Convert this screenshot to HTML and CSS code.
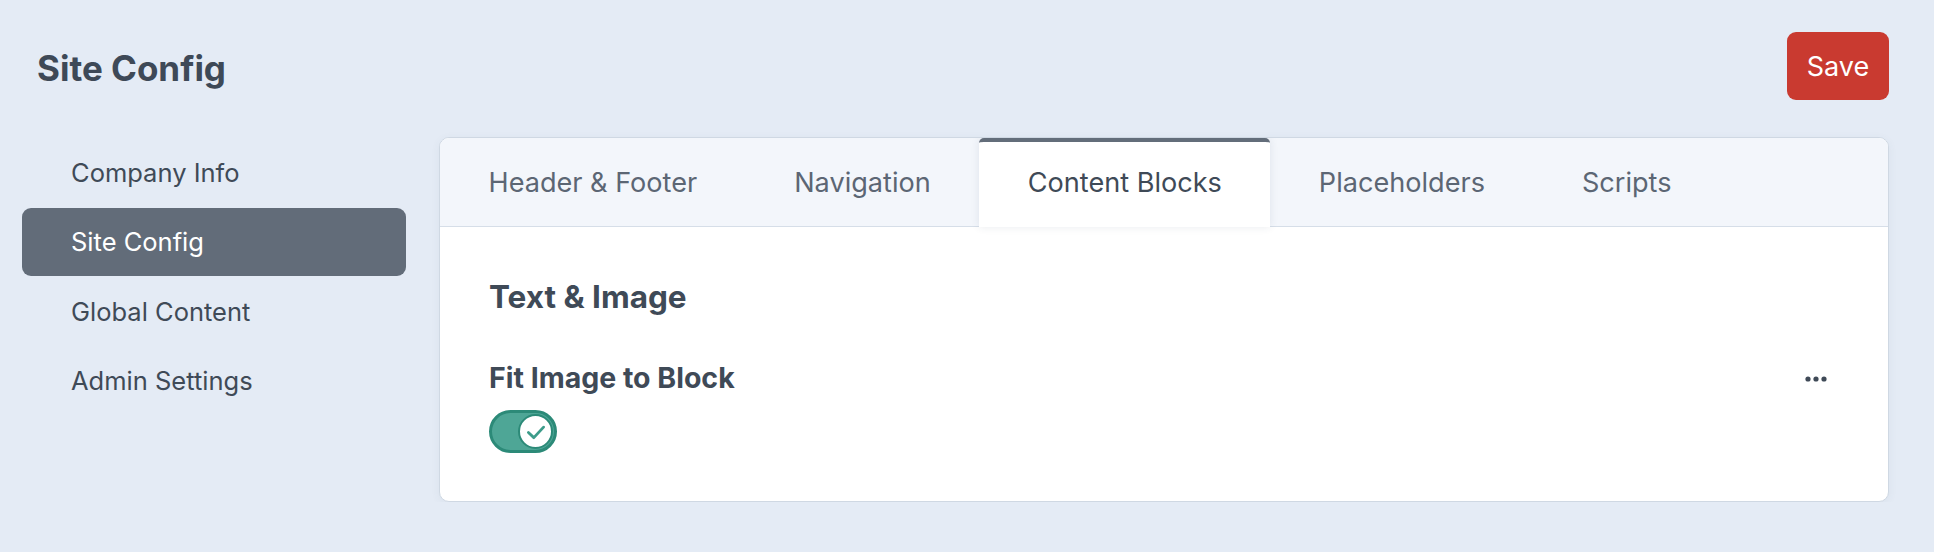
FILE: index.html
```html
<!DOCTYPE html>
<html lang="en">
<head>
<meta charset="utf-8">
<title>Site Config</title>
<link rel="stylesheet" href="styles.css">
</head>
<body>
<div class="page">
  <header class="topbar">
    <h1 class="title">Site Config</h1>
    <button class="save-btn" type="button">Save</button>
  </header>
  <div class="main">
    <nav class="sidebar">
      <a class="side-item">Company Info</a>
      <a class="side-item active">Site Config</a>
      <a class="side-item">Global Content</a>
      <a class="side-item">Admin Settings</a>
    </nav>
    <section class="card">
      <div class="tabs">
        <div class="tab">Header &amp; Footer</div>
        <div class="tab">Navigation</div>
        <div class="tab active">Content Blocks</div>
        <div class="tab">Placeholders</div>
        <div class="tab">Scripts</div>
      </div>
      <div class="card-body">
        <h2 class="block-title">Text &amp; Image</h2>
        <div class="field-row">
          <div class="field">
            <div class="field-label">Fit Image to Block</div>
            <div class="toggle on">
              <span class="knob">
                <svg viewBox="0 0 24 24" width="26" height="26" aria-hidden="true">
                  <path d="M5 12.5 L10 17.2 L19 7.5" fill="none" stroke="#3d9c8a" stroke-width="2.6" stroke-linecap="round" stroke-linejoin="round"/>
                </svg>
              </span>
            </div>
          </div>
          <button class="more-btn" type="button" aria-label="More">
            <svg viewBox="0 0 22 6" width="22" height="6" aria-hidden="true">
              <circle cx="3" cy="3" r="2.6" fill="#3f4a57"/>
              <circle cx="11" cy="3" r="2.6" fill="#3f4a57"/>
              <circle cx="19" cy="3" r="2.6" fill="#3f4a57"/>
            </svg>
          </button>
        </div>
      </div>
    </section>
  </div>
</div>
</body>
</html>
```

FILE: styles.css
```css
* { box-sizing: border-box; }

html, body {
  margin: 0;
  padding: 0;
}

body {
  background: #e4ebf5;
  font-family: Inter, "Noto Sans", "Liberation Sans", sans-serif;
  color: #3f4a57;
}

.page {
  padding: 32px 45px 0 22px;
}

.topbar {
  display: flex;
  justify-content: space-between;
  align-items: center;
  height: 68px;
  padding-left: 15px;
}

.title {
  margin: 0;
  padding-top: 3px;
  font-size: 35px;
  font-weight: 700;
  line-height: 40px;
  color: #3e4957;
}

.save-btn {
  width: 102px;
  height: 68px;
  border: none;
  border-radius: 9px;
  background: #c93a30;
  color: #ffffff;
  font-family: inherit;
  font-size: 27px;
  font-weight: 400;
  padding: 0;
  cursor: pointer;
}

.main {
  display: grid;
  grid-template-columns: 384px 1fr;
  gap: 33px;
  margin-top: 37px;
  align-items: start;
}

.sidebar {
  display: flex;
  flex-direction: column;
  gap: 1.3px;
  padding-top: 2px;
}

.side-item {
  display: block;
  height: 68px;
  line-height: 68px;
  padding-left: 49px;
  border-radius: 9px;
  font-size: 25.5px;
  color: #3f4a57;
  text-decoration: none;
}

.side-item.active {
  background: #626c79;
  color: #ffffff;
}

.card {
  background: #ffffff;
  border: 1px solid #cfd8e3;
  border-radius: 10px;
  box-shadow: 0 2px 10px rgba(60, 80, 110, 0.06);
  overflow: hidden;
}

.tabs {
  display: flex;
  height: 89px;
  background: #f3f6fb;
  border-bottom: 1px solid #d6dee8;
}

.tab {
  display: flex;
  align-items: center;
  padding: 0 48.5px;
  font-size: 27.1px;
  color: #5c6674;
  white-space: nowrap;
}

.tab.active {
  position: relative;
  background: #ffffff;
  color: #3f4a57;
  border-top: 4px solid #636d7a;
  border-radius: 5px 5px 0 0;
  margin-bottom: -1px;
  padding-bottom: 4px;
  box-shadow: 0 0 8px rgba(40, 60, 90, 0.10);
}

.card-body {
  padding: 52px 49px 48px 49px;
}

.block-title {
  margin: 0;
  font-size: 31.5px;
  font-weight: 700;
  line-height: 36px;
  color: #3f4a57;
}

.field-row {
  display: flex;
  justify-content: space-between;
  align-items: flex-start;
  margin-top: 46px;
}

.field-label {
  font-size: 28.5px;
  font-weight: 700;
  line-height: 33px;
  color: #3f4a57;
}

.toggle {
  margin-top: 16px;
  width: 68px;
  height: 43px;
  border-radius: 22px;
  background: #4ea696;
  border: 3px solid #2c8a78;
  display: flex;
  align-items: center;
  justify-content: flex-end;
  padding-right: 1px;
}

.knob {
  width: 35px;
  height: 35px;
  border-radius: 50%;
  background: #ffffff;
  border: 2px solid #2c8a78;
  display: flex;
  align-items: center;
  justify-content: center;
}

.more-btn {
  width: 46px;
  height: 33px;
  border: none;
  background: transparent;
  padding: 0;
  margin-top: 1px;
  display: flex;
  align-items: center;
  justify-content: center;
  cursor: pointer;
}
```
